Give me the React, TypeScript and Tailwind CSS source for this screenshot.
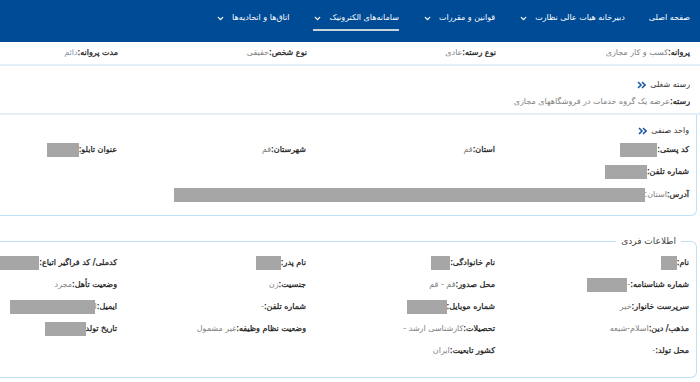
import { ChevronDown } from "lucide-react";

const font = "font-['DejaVu_Sans',sans-serif]";

function Redact({ w }: { w: number }) {
  return <span className="inline-block h-[14px] bg-[#a6a6a6] align-middle" style={{ width: w }} />;
}

function Field({ label, value, box, muted }: { label: string; value?: string; box?: number; muted?: boolean }) {
  return (
    <div className="flex items-center whitespace-nowrap text-[8px]">
      <span className="text-[#1c1c1c] [-webkit-text-stroke:0.25px_#1c1c1c]">{label}</span>
      {value && <span className={muted ? "text-[#8296ab]" : "text-[#808080]"}>{value}</span>}
      {box && <Redact w={box} />}
    </div>
  );
}

function DoubleChevron() {
  return (
    <svg width="9" height="8" viewBox="0 0 9 8" className="mr-1 inline-block">
      <path d="M1 1l3 3-3 3M5 1l3 3-3 3" fill="none" stroke="#1f5aa6" strokeWidth="1.6" />
    </svg>
  );
}

const nav = [
  { t: "صفحه اصلی", c: false },
  { t: "دبیرخانه هیات عالی نظارت", c: true },
  { t: "قوانین و مقررات", c: true },
  { t: "سامانه‌های الکترونیک", c: true, active: true },
  { t: "اتاق‌ها و اتحادیه‌ها", c: true },
];

const cols = "grid grid-cols-[194px_189px_189px_190px]";

export default function App() {
  return (
    <div dir="rtl" className={`${font} h-[382px] w-[700px] overflow-hidden bg-white`}>
      {/* top navigation */}
      <header className="flex h-[42px] items-start bg-[#004b96] pr-[10px] pt-[12px]">
        <nav className="flex items-start gap-[24px]">
          {nav.map((n) => (
            <div key={n.t} className="flex flex-col">
              <div className="flex items-center gap-[7px] text-[8px] text-white">
                <span>{n.t}</span>
                {n.c && <ChevronDown size={9} strokeWidth={3.5} />}
              </div>
              {n.active && <div className="mt-[5px] h-[2px] w-full bg-[#c9d3de]" />}
            </div>
          ))}
        </nav>
      </header>

      {/* license row */}
      <div className={`${cols} h-[24px] items-center border-b-2 border-[#e3f0fa] pr-[10px]`}>
        <Field label="پروانه:" value="کسب و کار مجازی" />
        <Field label="نوع رسته:" value="عادی" />
        <Field label="نوع شخص:" value="حقیقی" />
        <Field label="مدت پروانه:" value="دائم" muted />
      </div>

      {/* business category */}
      <section className="h-[49px] border-b-2 border-[#e3f0fa] pr-[10px] pt-[13px]">
        <div className="flex items-center text-[8px] text-[#333]">
          رسته شغلی
          <DoubleChevron />
        </div>
        <div className="mt-[5px]">
          <Field label="رسته:" value="عرضه یک گروه خدمات در فروشگاههای مجازی" />
        </div>
      </section>

      {/* guild unit */}
      <section className="mr-[3px] h-[101px] rounded-br-md border-r border-b border-[#bfe0f5] pr-[7px] pt-[10px]">
        <div className="flex items-center text-[8px] text-[#333]">
          واحد صنفی
          <DoubleChevron />
        </div>
        <div className={`${cols} mt-[2px] h-[22px] items-center`}>
          <Field label="کد پستی:" box={37} />
          <Field label="استان:" value="قم" />
          <Field label="شهرستان:" value="قم" />
          <Field label="عنوان تابلو:" box={32} />
        </div>
        <div className="flex h-[22px] items-center">
          <Field label="شماره تلفن:" box={42} />
        </div>
        <div className="flex h-[24px] items-center">
          <Field label="آدرس:" value="استان:" box={471} />
        </div>
      </section>

      {/* personal info */}
      <fieldset className="mr-[3px] mt-[19px] h-[143px] rounded-r-md border border-l-0 border-[#bfe0f5] pr-[7px]">
        <legend className="mr-[8px] px-[5px] text-[9px] text-[#444]">اطلاعات فردی</legend>
        <div className={`${cols} auto-rows-[22px] items-center pt-[3px]`}>
          <Field label="نام:" box={16} />
          <Field label="نام خانوادگی:" box={19} />
          <Field label="نام پدر:" box={25} />
          <Field label="کدملی/ کد فراگیر اتباع:" box={45} />

          <Field label="شماره شناسنامه:" value="-" box={40} />
          <Field label="محل صدور:" value="قم - قم" />
          <Field label="جنسیت:" value="زن" />
          <Field label="وضعیت تأهل:" value="مجرد" />

          <Field label="سرپرست خانوار:" value="خیر" />
          <Field label="شماره موبایل:" box={40} />
          <Field label="شماره تلفن:" value="-" />
          <Field label="ایمیل:" value="ا" box={85} />

          <Field label="مذهب/ دین:" value="اسلام-شیعه" />
          <Field label="تحصیلات:" value="کارشناسی ارشد -" />
          <Field label="وضعیت نظام وظیفه:" value="غیر مشمول" />
          <Field label="تاریخ تولد" box={41} />

          <Field label="محل تولد:" value=" -" />
          <Field label="کشور تابعیت:" value="ایران" />
        </div>
      </fieldset>
    </div>
  );
}
